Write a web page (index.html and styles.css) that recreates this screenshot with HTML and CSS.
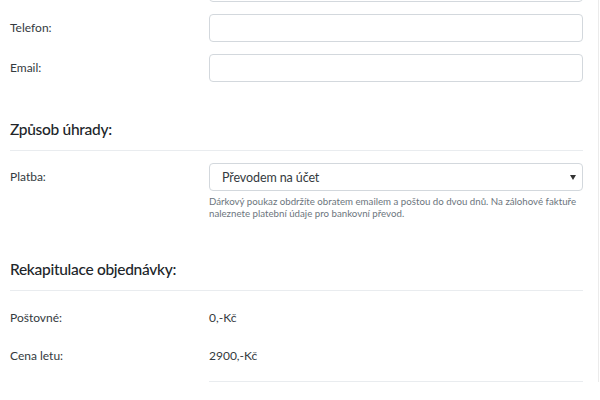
FILE: index.html
```html
<!DOCTYPE html>
<html lang="cs">
<head>
  <meta charset="UTF-8" />
  <title>Objednávka</title>
  <link rel="stylesheet" href="styles.css">
</head>
<body>
  <div class="page">
    <form class="order">
      <div class="form-row cut">
        <span></span>
        <input type="text" class="field" />
      </div>
      <div class="form-row">
        <label for="phone">Telefon:</label>
        <input type="text" id="phone" class="field" />
      </div>
      <div class="form-row">
        <label for="email">Email:</label>
        <input type="email" id="email" class="field" />
      </div>

      <h3 class="section-title">Způsob úhrady:</h3>

      <div class="form-row">
        <label for="pay">Platba:</label>
        <div class="select-wrap">
          <div class="select" id="pay">
            <span>Převodem na účet</span>
            <span class="caret"></span>
          </div>
          <p class="help">Dárkový poukaz obdržíte obratem emailem a poštou do dvou dnů. Na zálohové faktuře naleznete platební údaje pro bankovní převod.</p>
        </div>
      </div>

      <h3 class="section-title recap">Rekapitulace objednávky:</h3>

      <div class="sum-row">
        <span>Poštovné:</span>
        <span>0,-Kč</span>
      </div>
      <div class="sum-row">
        <span>Cena letu:</span>
        <span>2900,-Kč</span>
      </div>
      <div class="sum-line"></div>
    </form>
  </div>
</body>
</html>
```

FILE: styles.css
```css
* {
  box-sizing: border-box;
}

body {
  margin: 0;
  background: #fff;
  color: #212529;
  font-family: Lato, "Open Sans", sans-serif;
  font-size: 12px;
}

.page {
  width: 599px;
  min-height: 400px;
  padding: 0 15px 0 10px;
  border-right: 1px solid #ebebeb;
}

.order {
  margin-top: -26px;
}

.form-row {
  display: grid;
  grid-template-columns: 199px 1fr;
  align-items: start;
  margin-bottom: 12px;
}

.form-row label {
  line-height: 28px;
  color: #343a40;
}

.field,
.select {
  display: block;
  width: 100%;
  height: 28px;
  border: 1px solid #d3d8dd;
  border-radius: 4px;
  background: #fff;
  font-family: inherit;
  font-size: 12px;
}

.select {
  display: flex;
  align-items: center;
  justify-content: space-between;
  padding: 0 6px 0 12px;
  font-size: 12.5px;
  letter-spacing: -0.1px;
  color: #343a40;
}

.caret {
  width: 0;
  height: 0;
  border-left: 3px solid transparent;
  border-right: 3px solid transparent;
  border-top: 5px solid #333;
}

.help {
  margin: 5px 0 0;
  font-size: 9.7px;
  line-height: 11.5px;
  color: #6c757d;
}

.section-title {
  margin: 36px 0 0;
  padding-bottom: 10px;
  border-bottom: 1px solid #e9ecef;
  font-size: 15.5px;
  font-weight: 500;
  letter-spacing: -0.3px;
  line-height: 22px;
  color: #212529;
}

.section-title + .form-row {
  margin-top: 12px;
}

.section-title.recap {
  margin-top: 39px;
}

.sum-row {
  display: grid;
  grid-template-columns: 199px 1fr;
  line-height: 20px;
  margin-top: 17px;
  color: #343a40;
}

.sum-row + .sum-row {
  margin-top: 18px;
}

.sum-line {
  margin: 15px 0 0 199px;
  border-top: 1px solid #e9ecef;
}
```
